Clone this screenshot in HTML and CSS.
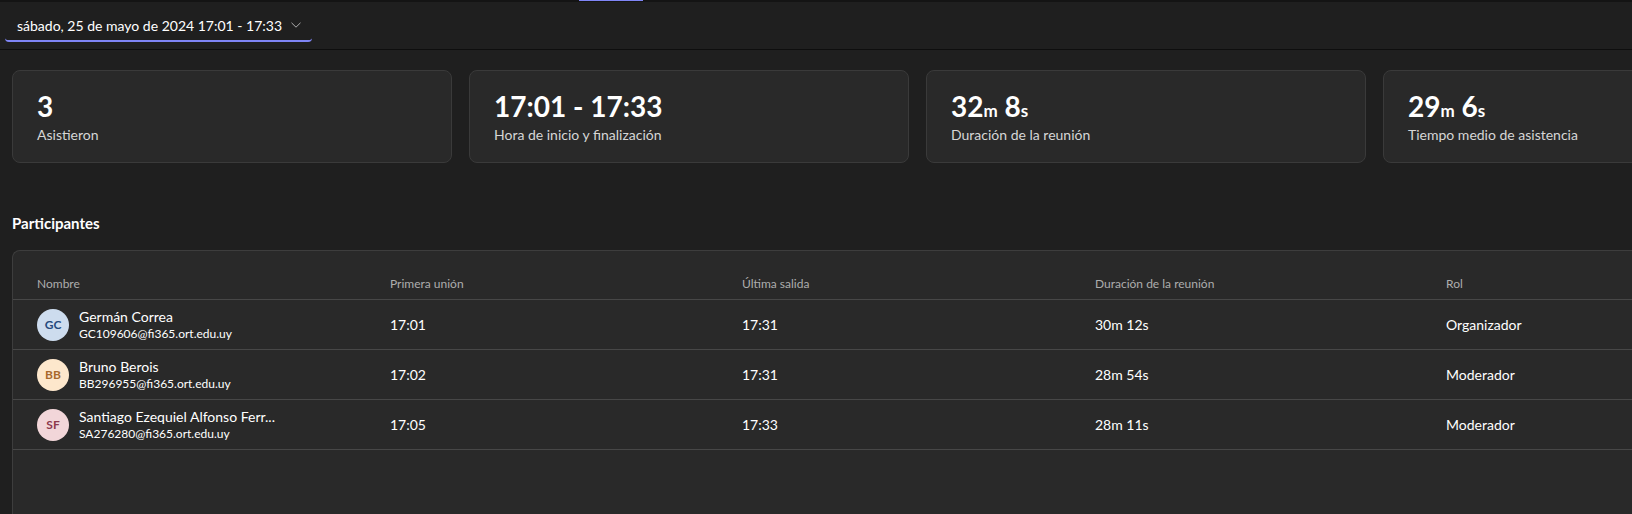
FILE: index.html
```html
<!DOCTYPE html>
<html lang="es">
<head>
<meta charset="utf-8">
<title>Informe de asistencia</title>
<link rel="stylesheet" href="styles.css">
</head>
<body>
<div class="topstrip"><span class="topmark"></span></div>
<header class="header">
  <button class="datepicker">
    <span class="datepicker-text">sábado, 25 de mayo de 2024 17:01 - 17:33</span>
    <svg class="chevron" width="12" height="12" viewBox="0 0 12 12"><path d="M1.5 3.8 L6 8.2 L10.5 3.8" fill="none" stroke="#adadad" stroke-width="1"/></svg>
  </button>
</header>
<main class="main">
  <section class="cards">
    <div class="card">
      <div class="card-value">3</div>
      <div class="card-label">Asistieron</div>
    </div>
    <div class="card">
      <div class="card-value">17:01 - 17:33</div>
      <div class="card-label">Hora de inicio y finalización</div>
    </div>
    <div class="card">
      <div class="card-value">32<span class="unit">m</span> 8<span class="unit">s</span></div>
      <div class="card-label">Duración de la reunión</div>
    </div>
    <div class="card">
      <div class="card-value">29<span class="unit">m</span> 6<span class="unit">s</span></div>
      <div class="card-label">Tiempo medio de asistencia</div>
    </div>
  </section>
  <h2 class="section-title">Participantes</h2>
  <section class="table">
    <div class="row head">
      <div class="cell">Nombre</div>
      <div class="cell">Primera unión</div>
      <div class="cell">Última salida</div>
      <div class="cell">Duración de la reunión</div>
      <div class="cell">Rol</div>
    </div>
    <div class="row">
      <div class="cell person">
        <span class="avatar av-blue">GC</span>
        <div class="person-info"><div class="person-name">Germán Correa</div><div class="person-mail">GC109606@fi365.ort.edu.uy</div></div>
      </div>
      <div class="cell">17:01</div>
      <div class="cell">17:31</div>
      <div class="cell">30m 12s</div>
      <div class="cell">Organizador</div>
    </div>
    <div class="row">
      <div class="cell person">
        <span class="avatar av-orange">BB</span>
        <div class="person-info"><div class="person-name">Bruno Berois</div><div class="person-mail">BB296955@fi365.ort.edu.uy</div></div>
      </div>
      <div class="cell">17:02</div>
      <div class="cell">17:31</div>
      <div class="cell">28m 54s</div>
      <div class="cell">Moderador</div>
    </div>
    <div class="row">
      <div class="cell person">
        <span class="avatar av-pink">SF</span>
        <div class="person-info"><div class="person-name">Santiago Ezequiel Alfonso Ferr...</div><div class="person-mail">SA276280@fi365.ort.edu.uy</div></div>
      </div>
      <div class="cell">17:05</div>
      <div class="cell">17:33</div>
      <div class="cell">28m 11s</div>
      <div class="cell">Moderador</div>
    </div>
  </section>
</main>
</body>
</html>
```
FILE: styles.css
```css
* { box-sizing: border-box; }
html, body { margin: 0; padding: 0; }
body {
  background: #1f1f1f;
  color: #ffffff;
  font-family: Lato, "Open Sans", "Noto Sans", sans-serif;
  font-size: 14px;
  width: 1632px;
  height: 514px;
  overflow: hidden;
}
.topstrip {
  height: 2px;
  background: #141414;
  display: flex;
}
.topmark {
  margin-left: 579px;
  width: 64px;
  height: 1px;
  background: #7f85f5;
}
.header {
  height: 48px;
  border-bottom: 1px solid #0e0e0e;
  padding: 8px 0 0 5px;
}
.datepicker {
  display: flex;
  align-items: center;
  gap: 8px;
  width: 307px;
  height: 32px;
  padding: 0 0 0 12px;
  background: transparent;
  border: none;
  border-bottom: 2px solid #7f85f5;
  border-radius: 4px;
  color: #ffffff;
  font-family: inherit;
  font-size: 14px;
  cursor: pointer;
}
.chevron { display: block; }
.main {
  padding: 20px 0 0 12px;
}
.cards {
  display: flex;
  gap: 17px;
}
.card {
  flex: 0 0 440px;
  height: 93px;
  background: #292929;
  border: 1px solid #3a3a3a;
  border-radius: 8px;
  padding: 17px 24px 0 24px;
}
.card-value {
  font-size: 28px;
  font-weight: 700;
  line-height: 36px;
}
.unit {
  font-size: 17px;
  line-height: 1;
}
.card-label {
  font-size: 14px;
  line-height: 20px;
  margin-top: 1px;
  color: #d6d6d6;
}
.section-title {
  margin: 50px 0 0 0;
  font-size: 15px;
  font-weight: 700;
  line-height: 20px;
  height: 20px;
}
.table {
  margin-top: 17px;
  background: #292929;
  border: 1px solid #3d3d3d;
  border-right: none;
  border-bottom: none;
  border-radius: 8px 0 0 0;
  padding-top: 16px;
  height: 300px;
}
.row {
  display: grid;
  grid-template-columns: 353px 352px 353px 351px 1fr;
  height: 50px;
  border-bottom: 1px solid #474747;
  padding-left: 24px;
  align-items: center;
}
.row.head {
  height: 33px;
  color: #adadad;
  font-size: 12px;
}
.cell {
  white-space: nowrap;
}
.person {
  display: flex;
  align-items: center;
  gap: 10px;
}
.avatar {
  width: 32px;
  height: 32px;
  border-radius: 50%;
  display: flex;
  align-items: center;
  justify-content: center;
  font-size: 12px;
  font-weight: 700;
  flex: 0 0 32px;
}
.av-blue { background: #cddcee; color: #254a7d; }
.av-orange { background: #fde7cc; color: #a8692c; }
.av-pink { background: #f2d6d9; color: #8d3a4d; }
.person-name {
  font-size: 14px;
  line-height: 19px;
}
.person-mail {
  font-size: 12px;
  line-height: 16px;
}
```
